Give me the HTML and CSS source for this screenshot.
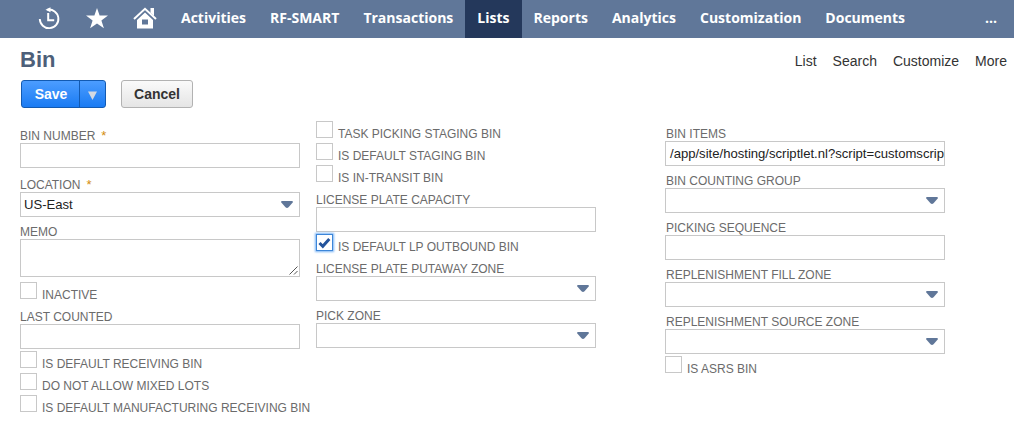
FILE: index.html
```html
<!DOCTYPE html>
<html lang="en">
<head>
<meta charset="utf-8">
<title>Bin</title>
<link rel="stylesheet" href="styles.css">
</head>
<body>
<nav class="nav">
  <div class="nav-icons">
    <svg class="icon" width="24" height="24" viewBox="0 0 24 24"><path d="M10.500 3.700a9.300 9.300 0 1 1-7.700 9.300" fill="none" stroke="#fff" stroke-width="1.900"/><path d="M8.500 3.800 13.500 1.300v5z" fill="#fff"/><path d="M11.200 7v7.200h6" fill="none" stroke="#fff" stroke-width="2"/></svg>
    <svg class="icon" width="24" height="24" viewBox="0 0 24 24"><path d="M12 2l2.600 7.500H23l-6.600 5 2.500 7.700-6.900-4.700-6.900 4.700 2.500-7.700L1 9.500h8.400z" fill="#fff"/></svg>
    <svg class="icon" width="24" height="24" viewBox="0 0 24 24"><path d="M1 13 12 2.800 23 13" fill="none" stroke="#fff" stroke-width="2"/><path d="M17.500 2H21v8l-3.500-3.300z" fill="#fff"/><path fill-rule="evenodd" d="M12 6.500 20 14v8.500H4V14zM9 13.500v5h6v-5z" fill="#fff"/></svg>
  </div>
  <a class="nav-item">Activities</a>
  <a class="nav-item">RF-SMART</a>
  <a class="nav-item">Transactions</a>
  <a class="nav-item active">Lists</a>
  <a class="nav-item">Reports</a>
  <a class="nav-item">Analytics</a>
  <a class="nav-item">Customization</a>
  <a class="nav-item">Documents</a>
  <a class="nav-more">...</a>
</nav>
<header class="head">
  <h1 class="title">Bin</h1>
  <div class="links"><a>List</a><a>Search</a><a>Customize</a><a>More</a></div>
</header>
<div class="actions">
  <div class="split"><button class="save">Save</button><button class="drop"><svg width="9" height="9" viewBox="0 0 9 9"><path d="M0 .5h9L4.500 9z" fill="#d3d9e2"/></svg></button></div>
  <button class="cancel">Cancel</button>
</div>
<main class="form">
  <section class="col">
    <div class="label required">BIN NUMBER<span class="star">*</span></div>
    <div class="box"></div>
    <div class="label required">LOCATION<span class="star">*</span></div>
    <div class="box select"><span>US-East</span><svg class="arrow" width="12" height="7" viewBox="0 0 12 7"><path d="M1 0h10q1.500.500.500 1.800L7.500 6.300q-1.500 1.200-3 0L.5 1.800Q-.5.500 1 0z"/></svg></div>
    <div class="label">MEMO</div>
    <div class="box memo"><svg width="9" height="9" viewBox="0 0 9 9"><path d="M.5 8.500l8-8M5 8.500l3.500-3.500" stroke="#555" fill="none"/></svg></div>
    <div class="check"><i class="tick"></i>INACTIVE</div>
    <div class="label">LAST COUNTED</div>
    <div class="box"></div>
    <div class="check"><i class="tick"></i>IS DEFAULT RECEIVING BIN</div>
    <div class="check"><i class="tick"></i>DO NOT ALLOW MIXED LOTS</div>
    <div class="check"><i class="tick"></i>IS DEFAULT MANUFACTURING RECEIVING BIN</div>
  </section>
  <section class="col">
    <div class="check"><i class="tick"></i>TASK PICKING STAGING BIN</div>
    <div class="check"><i class="tick"></i>IS DEFAULT STAGING BIN</div>
    <div class="check"><i class="tick"></i>IS IN-TRANSIT BIN</div>
    <div class="label">LICENSE PLATE CAPACITY</div>
    <div class="box"></div>
    <div class="check"><i class="tick checked"><svg width="13" height="12" viewBox="0 0 13 12"><path d="M1.500 6l3.300 3.300L11.300 2" fill="none" stroke="#24549c" stroke-width="3"/></svg></i>IS DEFAULT LP OUTBOUND BIN</div>
    <div class="label">LICENSE PLATE PUTAWAY ZONE</div>
    <div class="box select"><span></span><svg class="arrow" width="12" height="7" viewBox="0 0 12 7"><path d="M1 0h10q1.500.500.500 1.800L7.500 6.300q-1.500 1.200-3 0L.5 1.800Q-.5.500 1 0z"/></svg></div>
    <div class="label">PICK ZONE</div>
    <div class="box select"><span></span><svg class="arrow" width="12" height="7" viewBox="0 0 12 7"><path d="M1 0h10q1.500.500.500 1.800L7.500 6.300q-1.500 1.200-3 0L.5 1.800Q-.5.500 1 0z"/></svg></div>
  </section>
  <section class="col last">
    <div class="label">BIN ITEMS</div>
    <div class="box url"><span>/app/site/hosting/scriptlet.nl?script=customscrip</span></div>
    <div class="label">BIN COUNTING GROUP</div>
    <div class="box select"><span></span><svg class="arrow" width="12" height="7" viewBox="0 0 12 7"><path d="M1 0h10q1.500.500.500 1.800L7.500 6.300q-1.500 1.200-3 0L.5 1.800Q-.5.500 1 0z"/></svg></div>
    <div class="label">PICKING SEQUENCE</div>
    <div class="box"></div>
    <div class="label">REPLENISHMENT FILL ZONE</div>
    <div class="box select"><span></span><svg class="arrow" width="12" height="7" viewBox="0 0 12 7"><path d="M1 0h10q1.500.500.500 1.800L7.500 6.300q-1.500 1.200-3 0L.5 1.800Q-.5.500 1 0z"/></svg></div>
    <div class="label">REPLENISHMENT SOURCE ZONE</div>
    <div class="box select"><span></span><svg class="arrow" width="12" height="7" viewBox="0 0 12 7"><path d="M1 0h10q1.500.500.500 1.800L7.500 6.300q-1.500 1.200-3 0L.5 1.800Q-.5.500 1 0z"/></svg></div>
    <div class="check"><i class="tick"></i>IS ASRS BIN</div>
  </section>
</main>
</body>
</html>
```
FILE: styles.css
```css
* { box-sizing: border-box; }
body { margin: 0; background: #fff; font-family: "Liberation Sans", Arial, sans-serif; overflow: hidden; }
.nav { display: flex; height: 38px; background: #607799; color: #fff; font: bold 14px/36px "Open Sans", sans-serif; }
.nav-icons { display: flex; gap: 24px; width: 169px; padding: 6px 0 0 37px; }
.icon { display: block; flex: none; }
.nav-item { padding: 0 12px; white-space: nowrap; }
.active { background: #24385b; }
.nav-more { margin-left: auto; padding-right: 17px; }
.head { display: flex; justify-content: space-between; height: 42px; padding: 8px 7px 0 20px; }
.title { margin: 0; font-size: 22px; line-height: 27px; color: #4d5f79; }
.links { display: flex; gap: 16px; padding-top: 6px; font-size: 14px; line-height: 18px; color: #333; }
.actions { display: flex; gap: 15px; height: 39px; padding-left: 21px; }
.split { display: flex; width: 85px; height: 28px; border: 1px solid #125ab2; border-radius: 3px; background: linear-gradient(#4c9dff, #1a7bf3); }
.save, .drop, .cancel { font: bold 14px/24px "Liberation Sans", Arial, sans-serif; }
.save { width: 57px; padding: 0 0 0 1px; border: 0; background: none; color: #fff; }
.drop { display: flex; flex: 1; align-items: center; justify-content: center; padding: 2px 0 0; border: 0; border-left: 1px solid #125ab2; background: none; }
.cancel { width: 72px; height: 28px; padding: 0; border: 1px solid #b2b2b2; border-radius: 3px; background: linear-gradient(#fafafa, #e5e5e5); color: #333; }
.form { display: grid; grid-template-columns: 296px 349px 280px; padding-left: 20px; }
.col { width: 280px; font-size: 12px; color: #6b6b6b; white-space: nowrap; }
.label { height: 22px; padding-top: 8px; line-height: 14px; }
.required { height: 24px; padding-top: 10px; }
.last .label { padding-left: 1px; }
.star { margin-left: 6px; color: #d38c0e; font-size: 13px; line-height: 12px; }
.box { height: 25px; border: 1px solid #c8c8c8; background: #fff; }
.select, .url { display: flex; align-items: center; justify-content: space-between; padding: 0 6px 0 3px; font-size: 13.1px; color: #222; }
.url { padding: 0 0 0 4px; }
.arrow { fill: #607799; }
.memo { display: flex; align-items: flex-end; justify-content: flex-end; height: 38px; margin-bottom: 3px; padding: 0 1px 1px 0; }
.check { display: flex; gap: 5px; height: 22px; padding-top: 2px; line-height: 26px; }
.tick { flex: none; width: 17px; height: 17px; border: 1px solid #c8c8c8; background: #fff; }
.checked { display: flex; align-items: center; justify-content: center; border-color: #3d86d8; box-shadow: 0 0 2px 1px #78b3f5; }
```
